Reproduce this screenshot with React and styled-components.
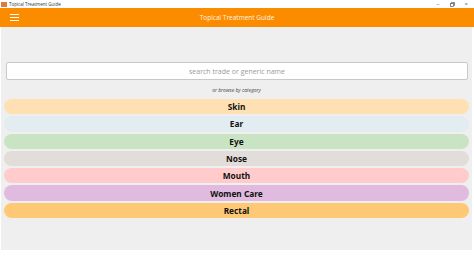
import React from 'react';
import styled, { createGlobalStyle } from 'styled-components';

const GlobalStyle = createGlobalStyle`
  html, body {
    margin: 0;
    padding: 0;
    background: #ffffff;
    font-family: "Open Sans", "Noto Sans", sans-serif;
  }
`;

const Window = styled.div`
  width: 474px;
  height: 266px;
  display: flex;
  flex-direction: column;
  background: #ffffff;
  overflow: hidden;
`;

const TitleBar = styled.div`
  height: 8px;
  display: flex;
  align-items: center;
  padding: 0 4px 0 1px;
  font-size: 4.5px;
  color: #333;
`;

const AppIcon = styled.div`
  width: 6px;
  height: 5px;
  background: #e07a3a;
  margin-right: 2px;
`;

const WindowControls = styled.div`
  margin-left: auto;
  display: flex;
  gap: 10px;
  align-items: center;
  color: #555;
  font-size: 6px;
  padding-right: 2px;
`;

const TopBar = styled.header`
  height: 19px;
  background: #fb8c00;
  display: flex;
  align-items: center;
  position: relative;
  padding-left: 10px;
`;

const TopTitle = styled.div`
  position: absolute;
  left: 0;
  right: 0;
  text-align: center;
  color: #fff3e0;
  font-size: 6.5px;
  pointer-events: none;
`;

const Content = styled.main`
  height: 223px;
  margin: 0 2px 0 1px;
  background: #efefef;
  display: flex;
  flex-direction: column;
  padding: 35px 3px 0;
  box-sizing: border-box;
`;

const SearchBox = styled.div`
  height: 16px;
  background: #ffffff;
  border: 1px solid #c9c9c9;
  border-radius: 2px;
  margin: 0 1px 0 2px;
  display: flex;
  align-items: center;
  justify-content: center;
  color: #9a9a9a;
  font-size: 7px;
`;

const BrowseHint = styled.div`
  text-align: center;
  font-style: italic;
  font-size: 5px;
  color: #444;
  margin: 7px 0 6px;
`;

const CategoryList = styled.div`
  display: flex;
  flex-direction: column;
  gap: 2px;
`;

const Category = styled.div`
  height: 15.3px;
  border-radius: 8px;
  background: ${p => p.$bg};
  display: flex;
  align-items: center;
  justify-content: center;
  font-family: "Noto Sans", "Open Sans", sans-serif;
  font-weight: 700;
  font-size: 8.3px;
  color: #111;
`;

const categories = [
  { name: 'Skin', bg: '#ffe0b2' },
  { name: 'Ear', bg: '#e3ecf1' },
  { name: 'Eye', bg: '#c9e4c2' },
  { name: 'Nose', bg: '#e2ddd8' },
  { name: 'Mouth', bg: '#ffcccb' },
  { name: 'Women Care', bg: '#e0bbdf' },
  { name: 'Rectal', bg: '#ffc875' },
];

const Menu = () => (
  <svg width="9" height="7" viewBox="0 0 9 7">
    <rect x="0" y="0" width="9" height="1" fill="#fff" />
    <rect x="0" y="3" width="9" height="1" fill="#fff" />
    <rect x="0" y="6" width="9" height="1" fill="#fff" />
  </svg>
);

export default function App() {
  return (
    <Window>
      <GlobalStyle />
      <TitleBar>
        <AppIcon />
        <span>Topical Treatment Guide</span>
        <WindowControls>
          <span>–</span>
          <svg width="5" height="5" viewBox="0 0 5 5">
            <rect x="0.5" y="1.5" width="3" height="3" fill="none" stroke="#555" strokeWidth="0.7" />
            <path d="M1.5 1.5V0.5H4.5V3.5H3.5" fill="none" stroke="#555" strokeWidth="0.7" />
          </svg>
          <span>×</span>
        </WindowControls>
      </TitleBar>
      <TopBar>
        <Menu />
        <TopTitle>Topical Treatment Guide</TopTitle>
      </TopBar>
      <Content>
        <SearchBox>search trade or generic name</SearchBox>
        <BrowseHint>or browse by category</BrowseHint>
        <CategoryList>
          {categories.map(c => (
            <Category key={c.name} $bg={c.bg}>{c.name}</Category>
          ))}
        </CategoryList>
      </Content>
    </Window>
  );
}
